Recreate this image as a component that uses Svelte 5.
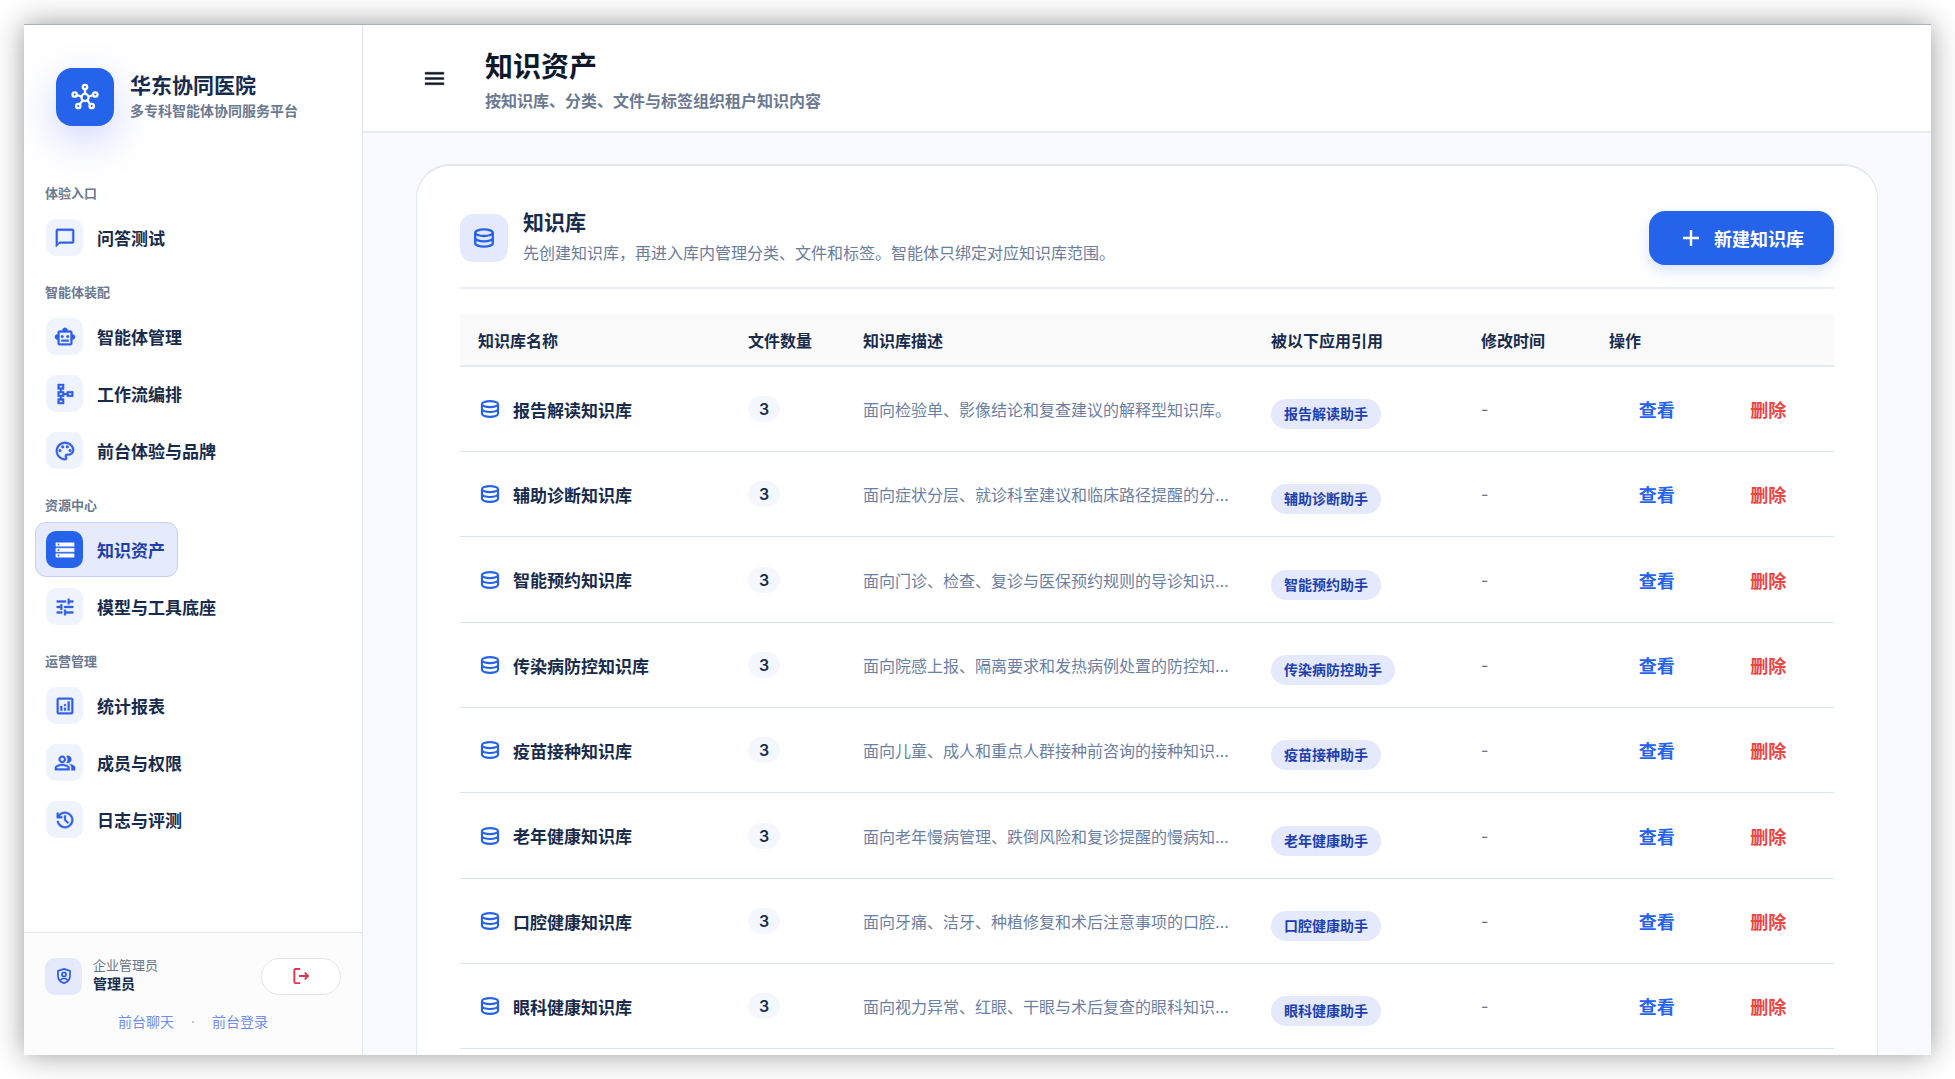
<script lang="ts">
	const icons: Record<string, string> = {
		chat: 'M20 2H4c-1.1 0-2 .9-2 2v18l4-4h14c1.1 0 2-.9 2-2V4c0-1.1-.9-2-2-2zm0 14H6l-2 2V4h16v12z',
		robot: 'M20 9V7c0-1.1-.9-2-2-2h-3c0-1.66-1.34-3-3-3S9 3.34 9 5H6c-1.1 0-2 .9-2 2v2c-1.66 0-3 1.34-3 3s1.34 3 3 3v4c0 1.1.9 2 2 2h12c1.1 0 2-.9 2-2v-4c1.66 0 3-1.34 3-3s-1.34-3-3-3zm-2 10H6V7h12v12zm-9-6c-.83 0-1.5-.67-1.5-1.5S8.17 10 9 10s1.5.67 1.5 1.5S9.83 13 9 13zm7.5-1.5c0 .83-.67 1.5-1.5 1.5s-1.5-.67-1.5-1.5.67-1.5 1.5-1.5 1.5.67 1.5 1.5zM8 15h8v2H8v-2z',
		flow: 'M14 9v2h-3V9H8.5V7H11V1H4v6h2.5v2H4v6h2.5v2H4v6h7v-6H8.5v-2H11v-2h3v2h7V9h-7zM6 3h3v2H6V3zm3 18H6v-2h3v2zm0-8H6v-2h3v2zm10 0h-3v-2h3v2z',
		palette: 'M12 22C6.49 22 2 17.51 2 12S6.49 2 12 2s10 4.04 10 9c0 3.31-2.69 6-6 6h-1.77c-.28 0-.5.22-.5.5 0 .12.05.23.13.33.41.47.64 1.06.64 1.67A2.5 2.5 0 0 1 12 22zm0-18c-4.41 0-8 3.59-8 8s3.59 8 8 8c.28 0 .5-.22.5-.5a.54.54 0 0 0-.14-.35c-.41-.46-.63-1.05-.63-1.65a2.5 2.5 0 0 1 2.5-2.5H16c2.21 0 4-1.79 4-4 0-3.86-3.59-7-8-7zM5 11.5a1.5 1.5 0 1 0 3 0 1.5 1.5 0 0 0-3 0zM8 7.5a1.5 1.5 0 1 0 3 0 1.5 1.5 0 0 0-3 0zM13 7.5a1.5 1.5 0 1 0 3 0 1.5 1.5 0 0 0-3 0zM16 11.5a1.5 1.5 0 1 0 3 0 1.5 1.5 0 0 0-3 0z',
		storage: 'M2 20h20v-4H2v4zm2-3h2v2H4v-2zM2 4v4h20V4H2zm4 3H4V5h2v2zm-4 7h20v-4H2v4zm2-3h2v2H4v-2z',
		tune: 'M3 17v2h6v-2H3zM3 5v2h10V5H3zm10 16v-2h8v-2h-8v-2h-2v6h2zM7 9v2H3v2h4v2h2V9H7zm14 4v-2H11v2h10zm-6-4h2V7h4V5h-4V3h-2v6z',
		chart: 'M19 3H5c-1.1 0-2 .9-2 2v14c0 1.1.9 2 2 2h14c1.1 0 2-.9 2-2V5c0-1.1-.9-2-2-2zm0 16H5V5h14v14zM7 12h2v5H7v-5zm8-5h2v10h-2V7zm-4 7h2v3h-2v-3zm0-4h2v2h-2v-2z',
		people: 'M16.67 13.13C18.04 14.06 19 15.32 19 17v3h4v-3c0-2.18-3.57-3.47-6.33-3.87zM15 12c2.21 0 4-1.79 4-4s-1.79-4-4-4c-.47 0-.91.1-1.33.24C14.5 5.27 15 6.58 15 8s-.5 2.73-1.33 3.76c.42.14.86.24 1.33.24zM9 12c2.21 0 4-1.79 4-4s-1.79-4-4-4-4 1.79-4 4 1.79 4 4 4zm0-6c1.1 0 2 .9 2 2s-.9 2-2 2-2-.9-2-2 .9-2 2-2zM9 13c-2.67 0-8 1.34-8 4v3h16v-3c0-2.66-5.33-4-8-4zm6 5H3v-.99C3.2 16.29 6.3 15 9 15s5.8 1.29 6 2v1z',
		history: 'M12 21q-3.45 0-6.01-2.29T3.05 13H5.1q.35 2.6 2.31 4.3T12 19q2.93 0 4.96-2.04T19 12t-2.04-4.96T12 5q-1.72 0-3.23.8T6.25 8H9v2H3V4h2v2.35q1.27-1.6 3.11-2.47T12 3q1.88 0 3.51.71t2.85 1.93 1.93 2.85T21 12t-.71 3.51-1.93 2.85-2.85 1.93T12 21m2.8-4.8L11 12.4V7h2v4.6l3.2 3.2z'
	}

	const groups = [
		{ label: '体验入口', items: [{ icon: 'chat', text: '问答测试' }] },
		{
			label: '智能体装配',
			items: [
				{ icon: 'robot', text: '智能体管理' },
				{ icon: 'flow', text: '工作流编排' },
				{ icon: 'palette', text: '前台体验与品牌' }
			]
		},
		{
			label: '资源中心',
			items: [
				{ icon: 'storage', text: '知识资产' },
				{ icon: 'tune', text: '模型与工具底座' }
			]
		},
		{
			label: '运营管理',
			items: [
				{ icon: 'chart', text: '统计报表' },
				{ icon: 'people', text: '成员与权限' },
				{ icon: 'history', text: '日志与评测' }
			]
		}
	]

	const rows = [
		{ name: '报告解读', app: '报告解读助手', desc: '面向检验单、影像结论和复查建议的解释型知识库。' },
		{ name: '辅助诊断', app: '辅助诊断助手', desc: '面向症状分层、就诊科室建议和临床路径提醒的分诊库。' },
		{ name: '智能预约', app: '智能预约助手', desc: '面向门诊、检查、复诊与医保预约规则的导诊知识库。' },
		{ name: '传染病防控', app: '传染病防控助手', desc: '面向院感上报、隔离要求和发热病例处置的防控知识库。' },
		{ name: '疫苗接种', app: '疫苗接种助手', desc: '面向儿童、成人和重点人群接种前咨询的接种知识库。' },
		{ name: '老年健康', app: '老年健康助手', desc: '面向老年慢病管理、跌倒风险和复诊提醒的慢病知识库。' },
		{ name: '口腔健康', app: '口腔健康助手', desc: '面向牙痛、洁牙、种植修复和术后注意事项的口腔知识。' },
		{ name: '眼科健康', app: '眼科健康助手', desc: '面向视力异常、红眼、干眼与术后复查的眼科知识库。' }
	]

	let active = $state('知识资产')
</script>

{#snippet database(size: number)}
	<svg class="database" width={size} height={size} viewBox="0 0 24 24" aria-hidden="true">
		<ellipse cx="12" cy="6.700" rx="8.800" ry="3.300" />
		<path d="M3.200 6.700v5.300c0 1.800 4 3.300 8.800 3.300s8.800-1.500 8.800-3.300V6.700M3.200 12v5.300c0 1.800 4 3.300 8.800 3.300s8.800-1.500 8.800-3.300V12" />
	</svg>
{/snippet}

<div class="page">
	<div class="window">
		<aside class="sidebar">
			<div class="brand">
				<div class="brand-mark">
					<svg width="32" height="32" viewBox="0 0 32 32" aria-hidden="true">
						<circle cx="16" cy="16.500" r="3.600" />
						<circle cx="16" cy="6" r="2.200" />
						<circle cx="5.700" cy="13.500" r="2.200" />
						<circle cx="26.300" cy="13.500" r="2.200" />
						<circle cx="9.300" cy="25" r="2.200" />
						<circle cx="22.700" cy="25" r="2.200" />
						<path d="M16 8.200v4.700M7.800 14.100l4.700 1.400M24.200 14.100l-4.700 1.400M10.700 23.200l3-3.800M21.300 23.200l-3-3.800" />
					</svg>
				</div>
				<div>
					<div class="brand-name">华东协同医院</div>
					<div class="brand-sub">多专科智能体协同服务平台</div>
				</div>
			</div>

			<nav class="nav">
				{#each groups as group}
					<div class="nav-group">
						<div class="nav-label">{group.label}</div>
						{#each group.items as item}
							<button
								type="button"
								class="nav-item"
								class:active={active === item.text}
								onclick={() => (active = item.text)}
							>
								<span class="nav-icon">
									<svg width="22" height="22" viewBox="0 0 24 24" aria-hidden="true"><path d={icons[item.icon]} /></svg>
								</span>
								{item.text}
							</button>
						{/each}
					</div>
				{/each}
			</nav>

			<div class="account">
				<div class="account-row">
					<span class="account-icon">
						<svg width="18" height="18" viewBox="0 0 24 24" aria-hidden="true">
							<path d="M12 2.500l8 2.700v6.300c0 4.800-3.200 8.400-8 10-4.800-1.600-8-5.200-8-10V5.200z" />
							<circle cx="12" cy="10" r="2.700" />
							<path d="M7 17.500c2.800-2.600 7.200-2.600 10 0" />
						</svg>
					</span>
					<div class="account-text">
						<div class="account-role">企业管理员</div>
						<div class="account-name">管理员</div>
					</div>
					<button type="button" class="logout" aria-label="退出登录">
						<svg width="20" height="20" viewBox="0 0 24 24" aria-hidden="true">
							<path d="M11 3.500H5.500a1.500 1.500 0 0 0-1.500 1.500v14a1.500 1.500 0 0 0 1.500 1.500H11M9.500 12H20M16.500 8l4 4-4 4" />
						</svg>
					</button>
				</div>
				<div class="account-links">
					<a href="#chat">前台聊天</a>
					<span>·</span>
					<a href="#login">前台登录</a>
				</div>
			</div>
		</aside>

		<div class="main">
			<header class="topbar">
				<button type="button" class="menu" aria-label="菜单">
					<svg width="25" height="25" viewBox="0 0 24 24" aria-hidden="true"><path d="M3 18h18v-2H3v2zm0-5h18v-2H3v2zm0-7v2h18V6H3z" /></svg>
				</button>
				<div class="heading">
					<h1>知识资产</h1>
					<p>按知识库、分类、文件与标签组织租户知识内容</p>
				</div>
			</header>

			<div class="content">
				<section class="card">
					<div class="card-head">
						<span class="card-icon">{@render database(24)}</span>
						<div class="card-title">
							<h2>知识库</h2>
							<p>先创建知识库，再进入库内管理分类、文件和标签。智能体只绑定对应知识库范围。</p>
						</div>
						<button type="button" class="create">
							<svg width="24" height="24" viewBox="0 0 24 24" aria-hidden="true"><path d="M12 4v16M4 12h16" /></svg>
							新建知识库
						</button>
					</div>

					<table>
						<colgroup>
							<col class="col-name" />
							<col class="col-count" />
							<col />
							<col class="col-app" />
							<col class="col-time" />
							<col class="col-actions" />
						</colgroup>
						<thead>
							<tr>
								<th>知识库名称</th>
								<th>文件数量</th>
								<th>知识库描述</th>
								<th>被以下应用引用</th>
								<th>修改时间</th>
								<th>操作</th>
							</tr>
						</thead>
						<tbody>
							{#each rows as row}
								<tr>
									<td>
										<div class="name">{@render database(22)}{row.name}知识库</div>
									</td>
									<td><span class="count">3</span></td>
									<td class="desc">{row.desc}</td>
									<td class="apps"><span class="tag">{row.app}</span></td>
									<td class="time">-</td>
									<td>
										<div class="actions">
											<button type="button">查看</button>
											<button type="button" class="danger">删除</button>
										</div>
									</td>
								</tr>
							{/each}
						</tbody>
					</table>
				</section>
			</div>
		</div>
	</div>
</div>

<style>
	:global(body) {
		background: #fff;
	}

	.page {
		box-sizing: border-box;
		height: 100vh;
		padding: 24px;
		overflow: hidden;
		font-family: Inter, 'Noto Sans CJK SC', sans-serif;
		color: #172b4d;
	}
	.page * {
		box-sizing: border-box;
	}

	.window {
		display: flex;
		height: 100%;
		border-top: 1px solid #a9afbd;
		background: #f8faff;
		box-shadow: 0 0 28px rgba(0, 0, 0, 0.4);
	}

	button {
		border: none;
		padding: 0;
		background: none;
		font-family: inherit;
		cursor: pointer;
	}
	h1,
	h2,
	p {
		margin: 0;
	}
	svg {
		display: block;
		flex: none;
		fill: currentColor;
	}
	.database {
		fill: none;
		stroke: #2563eb;
		stroke-width: 2.3;
	}

	.sidebar {
		display: flex;
		flex: none;
		flex-direction: column;
		width: 339px;
		border-right: 1px solid #dfe3ec;
		background: #fff;
	}
	.brand {
		display: flex;
		align-items: center;
		gap: 16px;
		padding: 43px 32px 57px;
	}
	.brand-mark {
		display: flex;
		align-items: center;
		justify-content: center;
		width: 58px;
		height: 58px;
		border-radius: 16px;
		background: #2563eb;
		box-shadow: 0 14px 40px rgba(79, 99, 245, 0.28);
	}
	.brand-mark svg {
		fill: none;
		stroke: #fff;
		stroke-width: 2.3;
	}
	.brand-name {
		font-size: 21px;
		font-weight: 700;
		line-height: 28px;
	}
	.brand-sub {
		font-size: 14px;
		font-weight: 600;
		line-height: 22px;
		color: #6b7a92;
	}

	.nav {
		flex: 1;
		min-height: 0;
		padding: 0 11px;
	}
	.nav-group {
		display: flex;
		flex-direction: column;
		align-items: flex-start;
		gap: 2px;
		margin-bottom: 17px;
	}
	.nav-label {
		padding: 0 10px 5px;
		font-size: 13px;
		font-weight: 600;
		line-height: 20px;
		color: #6b7a92;
	}
	.nav-item {
		display: flex;
		align-items: center;
		gap: 14px;
		height: 55px;
		padding: 0 12px 0 10px;
		border: 1px solid transparent;
		border-radius: 11px;
		font-size: 17px;
		font-weight: 600;
		color: #172b4d;
	}
	.nav-icon,
	.account-icon {
		display: flex;
		flex: none;
		align-items: center;
		justify-content: center;
		width: 37px;
		height: 37px;
		border-radius: 10px;
		background: #eff3fe;
		color: #2f5ee8;
	}
	.nav-icon svg,
	.menu svg {
		stroke: currentColor;
		stroke-width: 0.4;
	}
	.nav-item.active {
		border-color: #c3d0f5;
		background: #e5eafc;
		color: #1e40af;
	}
	.active .nav-icon {
		background: #2563eb;
		color: #fff;
	}

	.account {
		border-top: 1px solid #dfe3ea;
		padding: 23px 21px 22px;
		background: #fcfcfd;
	}
	.account-row {
		display: flex;
		align-items: center;
	}
	.account-icon {
		background: #e4e9fc;
	}
	.account-icon svg,
	.logout svg {
		fill: none;
		stroke: currentColor;
		stroke-width: 2.3;
	}
	.account-text {
		flex: 1;
		padding: 0 0 2px 11px;
	}
	.account-role {
		font-size: 13px;
		line-height: 18px;
		color: #64748b;
	}
	.account-name {
		font-size: 14px;
		font-weight: 700;
		line-height: 20px;
	}
	.logout {
		display: flex;
		align-items: center;
		justify-content: center;
		width: 80px;
		height: 37px;
		border: 1px solid #e2e5ee;
		border-radius: 19px;
		background: #fff;
		color: #e0364f;
	}
	.account-links {
		display: flex;
		justify-content: center;
		gap: 17px;
		padding-top: 15px;
		font-size: 14px;
		line-height: 22px;
		color: #94a3b8;
	}
	.account-links a {
		color: #6d8df0;
		text-decoration: none;
	}

	.main {
		display: flex;
		flex: 1;
		flex-direction: column;
		min-width: 0;
	}
	.topbar {
		display: flex;
		flex: none;
		align-items: center;
		gap: 27px;
		height: 108px;
		padding: 0 47px;
		border-bottom: 2px solid #e8ecf3;
		background: #fff;
	}
	.menu {
		display: flex;
		align-items: center;
		justify-content: center;
		width: 48px;
		height: 48px;
		color: #0f172a;
	}
	.heading {
		padding-top: 4px;
	}
	h1 {
		font-size: 28px;
		font-weight: 700;
		line-height: 40px;
		color: #0f172a;
	}
	.topbar p {
		padding-top: 2px;
		font-size: 16px;
		font-weight: 600;
		line-height: 24px;
		color: #6b7a92;
	}

	.content {
		flex: 1;
		min-height: 0;
		overflow: hidden;
		padding: 31px 53px 0;
	}
	.card {
		padding: 43px;
		border: 1px solid #e2e8f0;
		border-top-width: 2px;
		border-radius: 34px;
		background: #fff;
	}
	.card-head {
		display: flex;
		align-items: center;
		margin-bottom: 25px;
		padding-bottom: 20px;
		border-bottom: 2px solid #e8edf5;
	}
	.card-icon {
		display: flex;
		align-items: center;
		justify-content: center;
		width: 48px;
		height: 48px;
		border-radius: 13px;
		background: #e4e9fd;
	}
	.card-title {
		flex: 1;
		padding-left: 15px;
	}
	h2 {
		font-size: 21px;
		font-weight: 700;
		line-height: 28px;
	}
	.card-title p {
		padding-top: 2px;
		font-size: 16px;
		line-height: 28px;
		color: #6b7c9c;
	}
	.create {
		display: flex;
		align-items: center;
		justify-content: center;
		gap: 11px;
		width: 185px;
		height: 54px;
		border-radius: 16px;
		background: #2563eb;
		box-shadow: 0 6px 14px rgba(37, 99, 235, 0.18);
		font-size: 18px;
		font-weight: 700;
		color: #fff;
	}
	.create svg {
		stroke: #fff;
		stroke-width: 2.4;
	}

	table {
		width: 100%;
		border-collapse: separate;
		border-spacing: 0;
		table-layout: fixed;
	}
	.col-name {
		width: 270px;
	}
	.col-count {
		width: 115px;
	}
	.col-app {
		width: 210px;
	}
	.col-time {
		width: 128px;
	}
	.col-actions {
		width: 243px;
	}
	th {
		height: 53px;
		padding: 0 18px;
		border-bottom: 2px solid #e3e9f4;
		background: #fafafa;
		font-size: 16px;
		font-weight: 600;
		text-align: left;
	}
	td {
		height: 85px;
		padding: 0 18px;
		border-bottom: 1px solid #dbe4f1;
		font-size: 16px;
	}
	tr:nth-child(3n) td {
		height: 86px;
	}
	.name {
		display: flex;
		align-items: center;
		gap: 12px;
		padding-left: 1px;
		font-size: 17px;
		font-weight: 600;
	}
	.count {
		display: inline-block;
		width: 32px;
		border-radius: 13px;
		background: #f4f7ff;
		font-weight: 600;
		line-height: 26px;
		text-align: center;
	}
	.desc {
		overflow: hidden;
		color: #6b7fa3;
		text-overflow: ellipsis;
		white-space: nowrap;
	}
	.apps {
		padding-top: 10px;
	}
	.tag {
		display: inline-block;
		padding: 0 13px;
		border-radius: 15px;
		background: #e4e9fd;
		font-size: 14px;
		font-weight: 600;
		line-height: 30px;
		color: #1e40af;
		white-space: nowrap;
	}
	.time {
		color: #64748b;
	}
	.actions {
		display: flex;
		gap: 16px;
	}
	.actions button {
		width: 96px;
		font-size: 18px;
		font-weight: 600;
		color: #2563eb;
	}
	.actions .danger {
		color: #ef4444;
	}
</style>
